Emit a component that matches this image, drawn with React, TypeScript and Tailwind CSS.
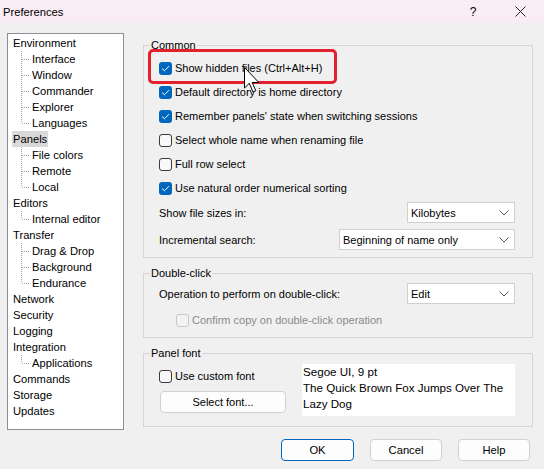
import React from "react";

function Check({ checked, disabled }: { checked?: boolean; disabled?: boolean }) {
  if (checked)
    return (
      <span className="w-[13px] h-[13px] rounded-[3px] bg-[#0067c0] flex items-center justify-center shrink-0">
        <svg width="9" height="7" viewBox="0 0 9 7">
          <path d="M1 3.5 L3.4 5.8 L8 1.2" fill="none" stroke="white" strokeWidth="1" />
        </svg>
      </span>
    );
  return (
    <span
      className={
        disabled
          ? "w-[13px] h-[13px] rounded-[3px] border border-[#c8c8c8] bg-[#f3f3f3] shrink-0"
          : "w-[13px] h-[13px] rounded-[3px] border border-[#3a3a3a] bg-[#f8f8f8] shrink-0"
      }
    />
  );
}

function CheckRow({ label, checked }: { label: string; checked?: boolean }) {
  return (
    <div className="h-[24px] flex items-center gap-[3px]">
      <Check checked={checked} />
      <span>{label}</span>
    </div>
  );
}

function Chevron() {
  return (
    <svg width="10" height="6" viewBox="0 0 10 6">
      <path d="M0.5 0.5 L5 5 L9.5 0.5" fill="none" stroke="#5a5a5a" strokeWidth="1" />
    </svg>
  );
}

function Select({ value, className }: { value: string; className: string }) {
  return (
    <div className={"h-[21px] bg-white border border-[#d0d0d0] flex items-center justify-between pl-[3px] pr-[5px] " + className}>
      <span>{value}</span>
      <Chevron />
    </div>
  );
}

function TreeTop({ label, selected }: { label: string; selected?: boolean }) {
  return (
    <div className="h-[16px] flex items-center pl-[4px]">
      <span className={selected ? "px-[1px] bg-[#d9d9d9]" : "px-[1px]"}>{label}</span>
    </div>
  );
}

function TreeChild({ label, last }: { label: string; last?: boolean }) {
  return (
    <div className="h-[16px] flex items-center">
      <svg width="24" height="16" viewBox="0 0 24 16" className="shrink-0">
        <line x1="13.5" y1="0" x2="13.5" y2={last ? 8 : 16} stroke="#a0a0a0" strokeWidth="1" strokeDasharray="1 1" />
        <line x1="14" y1="8.5" x2="22" y2="8.5" stroke="#a0a0a0" strokeWidth="1" strokeDasharray="1 1" />
      </svg>
      <span>{label}</span>
    </div>
  );
}

const tree: [string, string[]][] = [
  ["Environment", ["Interface", "Window", "Commander", "Explorer", "Languages"]],
  ["Panels", ["File colors", "Remote", "Local"]],
  ["Editors", ["Internal editor"]],
  ["Transfer", ["Drag & Drop", "Background", "Endurance"]],
  ["Network", []],
  ["Security", []],
  ["Logging", []],
  ["Integration", ["Applications"]],
  ["Commands", []],
  ["Storage", []],
  ["Updates", []],
];

export default function App() {
  return (
    <div className="w-[544px] h-[469px] bg-[#f0f0f0] relative overflow-hidden text-[11.2px] leading-[16px] text-black font-['Liberation_Sans',Arial,sans-serif]">
      {/* Title bar */}
      <div className="h-[23px] bg-[#f9ecf5] flex items-center pl-[3px]">
        <span className="flex-1">Preferences</span>
        <span className="w-[12px] text-center mr-[36px] text-[12px]">?</span>
        <svg width="11" height="11" viewBox="0 0 11 11" className="mr-[18px]">
          <path d="M0.5 0.5 L10.5 10.5 M10.5 0.5 L0.5 10.5" stroke="#222" strokeWidth="1" />
        </svg>
      </div>

      {/* Main */}
      <div className="flex pl-[7px] pt-[10px]">
        {/* Tree */}
        <div className="w-[117px] h-[397px] border border-[#8a8f98] bg-white pt-[1px] shrink-0">
          {tree.map(([top, kids]) => (
            <div key={top}>
              <TreeTop label={top} selected={top === "Panels"} />
              {kids.map((k, i) => (
                <TreeChild key={k} label={k} last={i === kids.length - 1} />
              ))}
            </div>
          ))}
        </div>

        {/* Right column */}
        <div className="ml-[19px] w-[390px] flex flex-col pt-[4px] text-[11px]">
          <fieldset className="border border-[#d5d5d5] pl-[15px] pr-[17px] pt-[3px] pb-[7px]">
            <legend className="-ml-[9px] px-[1px]">Common</legend>
            <CheckRow label="Show hidden files (Ctrl+Alt+H)" checked />
            <CheckRow label="Default directory is home directory" checked />
            <CheckRow label="Remember panels' state when switching sessions" checked />
            <CheckRow label="Select whole name when renaming file" />
            <CheckRow label="Full row select" />
            <CheckRow label="Use natural order numerical sorting" checked />
            <div className="mt-[2px] flex items-center justify-between">
              <span>Show file sizes in:</span>
              <Select value="Kilobytes" className="w-[108px]" />
            </div>
            <div className="mt-[6px] flex items-center justify-between">
              <span>Incremental search:</span>
              <Select value="Beginning of name only" className="w-[176px]" />
            </div>
          </fieldset>

          <fieldset className="mt-[7px] border border-[#d5d5d5] pl-[15px] pr-[17px] pt-[2px] pb-[9px]">
            <legend className="-ml-[9px] px-[1px]">Double-click</legend>
            <div className="flex items-center justify-between">
              <span>Operation to perform on double-click:</span>
              <Select value="Edit" className="w-[108px]" />
            </div>
            <div className="mt-[8px] h-[16px] flex items-center gap-[3px] ml-[17px] text-[#8a8a8a]">
              <Check disabled />
              <span>Confirm copy on double-click operation</span>
            </div>
          </fieldset>

          <fieldset className="mt-[7px] border border-[#d5d5d5] pl-[15px] pr-[15px] pt-[3px] pb-[10px]">
            <legend className="-ml-[9px] px-[1px]">Panel font</legend>
            <div className="flex">
              <div className="w-[127px] flex flex-col">
                <CheckRow label="Use custom font" />
                <button className="mt-[3px] ml-[1px] h-[22px] w-[126px] bg-[#fdfdfd] border border-[#d0d0d0] rounded-[4px] flex items-center justify-center">
                  Select font...
                </button>
              </div>
              <div className="ml-[16px] w-[213px] h-[52px] bg-white pl-[1px] text-[11.6px] whitespace-nowrap overflow-hidden">
                Segoe UI, 9 pt
                <br />
                The Quick Brown Fox Jumps Over The
                <br />
                Lazy Dog
              </div>
            </div>
          </fieldset>
        </div>
      </div>

      {/* Bottom buttons */}
      <div className="mt-[9px] flex justify-end gap-[16px] pr-[14px]">
        <button className="w-[73px] h-[22px] bg-[#fdfdfd] border border-[#0067c0] rounded-[4px] flex items-center justify-center">OK</button>
        <button className="w-[72px] h-[22px] bg-[#fdfdfd] border border-[#d0d0d0] rounded-[4px] flex items-center justify-center">Cancel</button>
        <button className="w-[72px] h-[22px] bg-[#fdfdfd] border border-[#d0d0d0] rounded-[4px] flex items-center justify-center">Help</button>
      </div>

      {/* Red highlight overlay */}
      <div className="absolute left-[148px] top-[49px] w-[189px] h-[35px] border-[3px] border-[#e3202d] rounded-[5px]" />

      {/* Mouse cursor */}
      <svg className="absolute left-[244px] top-[67px]" width="17" height="27" viewBox="0 0 17 27">
        <path d="M0.5 0.5 L0.5 21 L5.3 16.3 L9 25 L11.8 23.8 L8.2 15.5 L14.8 15.5 Z" fill="white" stroke="black" strokeWidth="1" strokeLinejoin="miter" />
      </svg>
    </div>
  );
}
